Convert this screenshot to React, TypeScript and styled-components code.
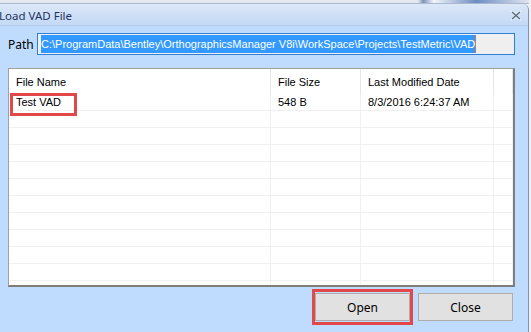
import React from "react";
import styled, { createGlobalStyle } from "styled-components";

const GlobalStyle = createGlobalStyle`
  html, body {
    margin: 0;
    padding: 0;
    background: #eef2f7;
    overflow: hidden;
  }
`;

const BehindStrip = styled.div`
  height: 3px;
  background: linear-gradient(to right, #e4e9f0 0%, #e4e9f0 79%, #7d93b8 80%, #f4f6fa 82%, #6d8cc4 90%, #dfe6f0 100%);
  border-bottom: 1px solid #a9b8cc;
  width: 529px;
`;

const Window = styled.div`
  width: 528px;
  height: 328px;
  border-right: 1px solid #7f93b0;
  border-top-right-radius: 6px;
  overflow: hidden;
  display: flex;
  flex-direction: column;
  background: #bfdbfe;
`;

const TitleBar = styled.div`
  height: 21px;
  flex: none;
  display: flex;
  align-items: center;
  justify-content: space-between;
  padding: 0 7px 0 0;
  background: linear-gradient(to bottom, #dce8f8 0%, #cfe0f7 50%, #c4d9f6 100%);
  border-bottom: 1px solid #b6cdee;
`;

const Title = styled.span`
  font-family: "Noto Sans", "Open Sans", sans-serif;
  font-size: 11.5px;
  color: #1e3561;
  margin-left: -1px;
  margin-top: 1px;
`;

const CloseGlyph = styled.svg`
  width: 10px;
  height: 9px;
  margin-top: 1px;
`;

const Client = styled.div`
  flex: 1;
  display: flex;
  flex-direction: column;
  padding: 7px 13px 0 8px;
`;

const PathRow = styled.div`
  display: flex;
  align-items: center;
  height: 22px;
`;

const Label = styled.span`
  font-family: "Noto Sans", "Open Sans", sans-serif;
  font-size: 12px;
  color: #000;
  width: 29px;
  flex: none;
`;

const TextBox = styled.div`
  flex: 1;
  height: 22px;
  box-sizing: border-box;
  border: 1px solid #2f7fd6;
  background: #efefef;
  display: flex;
  align-items: center;
  padding-left: 3px;
  overflow: hidden;
`;

const Selected = styled.span`
  font-family: "Liberation Sans", Arial, sans-serif;
  font-size: 11px;
  line-height: 18px;
  height: 18px;
  white-space: nowrap;
  background: #3399ff;
  color: #fff;
  border-right: 1px solid #c8793a;
`;

const List = styled.div`
  margin-top: 13px;
  height: 219px;
  box-sizing: border-box;
  border: 1px solid #a0a0a0;
  border-right: 2px solid #7e7e7e;
  border-bottom: 2px solid #7e7e7e;
  background: #fff;
  overflow: hidden;
  font-family: "Liberation Sans", Arial, sans-serif;
  font-size: 11px;
  color: #000;
`;

const Grid = styled.div`
  display: grid;
  grid-template-columns: 262px 90px 133px 1fr;
`;

const HeadCell = styled.div`
  height: 25px;
  box-sizing: border-box;
  display: flex;
  align-items: center;
  padding-left: 7px;
  border-right: 1px solid #e5e5e5;
  white-space: nowrap;
`;

const Cell = styled.div`
  position: relative;
  height: 17px;
  box-sizing: border-box;
  display: flex;
  align-items: center;
  padding-left: 7px;
  border-right: 1px solid #f0f0f0;
  border-bottom: 1px solid #f0f0f0;
  white-space: nowrap;
`;

const Marker = styled.span`
  position: absolute;
  left: 1px;
  top: -1px;
  width: 67px;
  height: 23px;
  box-sizing: border-box;
  border: 3px solid #e2474a;
  pointer-events: none;
`;

const ButtonRow = styled.div`
  display: flex;
  justify-content: flex-end;
  gap: 8px;
  margin-top: 6px;
  padding-right: 2px;
`;

const Button = styled.button<{ $marked?: boolean }>`
  position: relative;
  width: 95px;
  height: 28px;
  box-sizing: border-box;
  background: #e1e1e1;
  border: 1px solid #adadad;
  font-family: "Noto Sans", "Open Sans", sans-serif;
  font-size: 12px;
  color: #000;
  padding: 0;
  &::after {
    content: "";
    display: ${(p) => (p.$marked ? "block" : "none")};
    position: absolute;
    inset: -5px -4px -5px -4px;
    border: 3px solid #e2474a;
  }
`;

const columns = ["File Name", "File Size", "Last Modified Date", ""];
const rows: string[][] = [["Test VAD", "548 B", "8/3/2016 6:24:37 AM", ""]];
while (rows.length < 12) rows.push(["", "", "", ""]);

export default function App() {
  return (
    <>
      <GlobalStyle />
      <BehindStrip />
      <Window>
        <TitleBar>
          <Title>Load VAD File</Title>
          <CloseGlyph viewBox="0 0 10 9">
            <path d="M1 1 L9 8 M9 1 L1 8" stroke="#ffffff" strokeWidth="2.6" strokeLinecap="square" opacity="0.7" />
            <path d="M1 1 L9 8 M9 1 L1 8" stroke="#5d6b7e" strokeWidth="1.6" />
          </CloseGlyph>
        </TitleBar>
        <Client>
          <PathRow>
            <Label>Path</Label>
            <TextBox>
              <Selected>C:\ProgramData\Bentley\OrthographicsManager V8i\WorkSpace\Projects\TestMetric\VAD</Selected>
            </TextBox>
          </PathRow>
          <List>
            <Grid>
              {columns.map((c, i) => (
                <HeadCell key={i}>{c}</HeadCell>
              ))}
              {rows.map((r, ri) =>
                r.map((v, ci) => (
                  <Cell key={`${ri}-${ci}`}>
                    {v}
                    {ri === 0 && ci === 0 && <Marker />}
                  </Cell>
                ))
              )}
            </Grid>
          </List>
          <ButtonRow>
            <Button $marked>Open</Button>
            <Button>Close</Button>
          </ButtonRow>
        </Client>
      </Window>
    </>
  );
}
